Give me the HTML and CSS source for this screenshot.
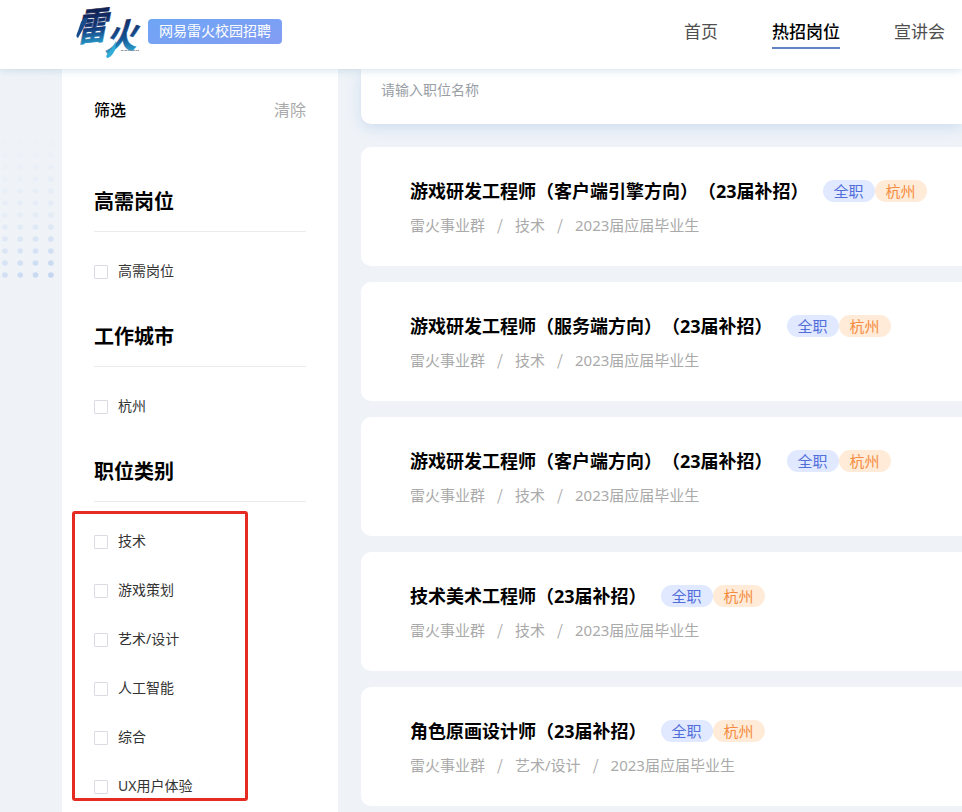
FILE: index.html
```
<!DOCTYPE html>
<html lang="zh-CN">
<head>
<meta charset="utf-8">
<title>网易雷火校园招聘</title>
<link rel="stylesheet" href="styles.css">
</head>
<body>
<header class="topbar">
  <div class="brand">
    <svg class="logo" width="68" height="60" viewBox="0 0 68 60">
      <defs>
        <linearGradient id="ink" gradientUnits="userSpaceOnUse" x1="0" y1="5" x2="0" y2="36">
          <stop offset="0" stop-color="#10204f"/><stop offset=".55" stop-color="#123b7c"/><stop offset="1" stop-color="#2aa5d3"/>
        </linearGradient>
        <linearGradient id="ink2" gradientUnits="userSpaceOnUse" x1="0" y1="22" x2="0" y2="54">
          <stop offset="0" stop-color="#123169"/><stop offset=".5" stop-color="#155293"/><stop offset="1" stop-color="#31b5dc"/>
        </linearGradient>
      </defs>
      <text class="ink" fill="url(#ink)" stroke="url(#ink)" transform="matrix(1 -.1 -.24 1.24 9 3)" x="0" y="31" font-size="31">雷</text>
      <text class="ink" fill="url(#ink2)" stroke="url(#ink2)" transform="matrix(1 -.12 -.3 1.12 16 1)" x="28" y="48" font-size="32">火</text>
      <path d="M6 22 Q10 16 13 18 Q10 26 3 38 Q0 37 3 31Z" fill="#174b8c"/>
      <path d="M31 56 Q37 49 41 41 L40 50 Q36 58 32 58Z" fill="#31add8"/>
      <path d="M46 50.5H64" stroke="#8895a3" stroke-dasharray="2 .6 1 .5"/>
    </svg>
    <span class="brand-tag">网易雷火校园招聘</span>
  </div>
  <nav class="nav">
    <a>首页</a><a class="active">热招岗位</a><a>宣讲会</a>
  </nav>
</header>
<main class="page">
  <svg class="dots" width="62" height="220">
    <defs>
      <pattern id="dot" patternUnits="userSpaceOnUse" x="-2.7" y="8" width="15.3" height="12"><circle cx="7.6" cy="6" r="2.8" fill="#bdd1ef"/></pattern>
      <linearGradient id="fade" x1="0" y1="0" x2="0" y2="1"><stop offset=".28" stop-color="#fff" stop-opacity="0"/><stop offset=".7" stop-color="#fff" stop-opacity=".25"/><stop offset="1" stop-color="#fff"/></linearGradient>
      <linearGradient id="side" x1="0" y1="0" x2="1" y2="0"><stop offset="0" stop-color="#eff4f9" stop-opacity=".4"/><stop offset="1" stop-color="#eff4f9" stop-opacity="0"/></linearGradient>
      <mask id="m"><rect width="62" height="212" fill="url(#fade)"/></mask>
    </defs>
    <rect width="58" height="211" fill="url(#dot)" mask="url(#m)"/>
    <rect width="58" height="211" fill="url(#side)"/>
  </svg>
  <aside class="sidebar">
    <div class="filter-head"><span>筛选</span><span class="clear">清除</span></div>
    <section class="group"><h3>高需岗位</h3>
      <label class="opt"><i></i>高需岗位</label></section>
    <section class="group"><h3>工作城市</h3>
      <label class="opt"><i></i>杭州</label></section>
    <section class="group"><h3>职位类别</h3>
      <label class="opt"><i></i>技术</label>
      <label class="opt"><i></i>游戏策划</label>
      <label class="opt"><i></i>艺术/设计</label>
      <label class="opt"><i></i>人工智能</label>
      <label class="opt"><i></i>综合</label>
      <label class="opt"><i></i>UX用户体验</label>
      <div class="highlight"></div>
    </section>
  </aside>
  <div class="content">
    <div class="search">请输入职位名称</div>
    <div class="jobs">
      <article class="job"><div class="title-row"><h2>游戏研发工程师（客户端引擎方向）（23届补招）</h2><span class="tag">全职</span><span class="tag city">杭州</span></div>
        <div class="meta"><span>雷火事业群</span><b>/</b><span>技术</span><b>/</b><span>2023届应届毕业生</span></div></article>
      <article class="job"><div class="title-row"><h2>游戏研发工程师（服务端方向）（23届补招）</h2><span class="tag">全职</span><span class="tag city">杭州</span></div>
        <div class="meta"><span>雷火事业群</span><b>/</b><span>技术</span><b>/</b><span>2023届应届毕业生</span></div></article>
      <article class="job"><div class="title-row"><h2>游戏研发工程师（客户端方向）（23届补招）</h2><span class="tag">全职</span><span class="tag city">杭州</span></div>
        <div class="meta"><span>雷火事业群</span><b>/</b><span>技术</span><b>/</b><span>2023届应届毕业生</span></div></article>
      <article class="job"><div class="title-row"><h2>技术美术工程师（23届补招）</h2><span class="tag">全职</span><span class="tag city">杭州</span></div>
        <div class="meta"><span>雷火事业群</span><b>/</b><span>技术</span><b>/</b><span>2023届应届毕业生</span></div></article>
      <article class="job"><div class="title-row"><h2>角色原画设计师（23届补招）</h2><span class="tag">全职</span><span class="tag city">杭州</span></div>
        <div class="meta"><span>雷火事业群</span><b>/</b><span>艺术/设计</span><b>/</b><span>2023届应届毕业生</span></div></article>
    </div>
  </div>
</main>
</body>
</html>
```
FILE: styles.css
```
* { box-sizing: border-box; }
body {
  margin: 0;
  width: 962px;
  height: 812px;
  overflow: hidden;
  background: #eff3f8;
  color: #000;
  font-family: "Noto Sans", "Noto Sans CJK SC", sans-serif;
  text-spacing-trim: space-all;
}
h2, h3 { margin: 0; }
.topbar {
  position: relative;
  z-index: 2;
  display: flex;
  justify-content: space-between;
  height: 69px;
  padding: 0 17px 0 75px;
  background: #fff;
  box-shadow: 0 1px 8px rgba(125, 165, 195, .35);
}
.brand { display: flex; gap: 5px; }
.logo { display: block; overflow: visible; }
.ink { font-family: "Noto Sans CJK SC", sans-serif; font-weight: 700; stroke-width: .5; }
.brand-tag {
  width: 134px;
  height: 25px;
  margin-top: 18.5px;
  border-radius: 4px;
  background: linear-gradient(165deg, #6ea5f5, #839df3);
  color: #fff;
  font-size: 14px;
  line-height: 24px;
  text-align: center;
}
.nav { display: flex; gap: 54px; font-size: 17px; color: #505050; }
.nav a { height: 49px; line-height: 25px; padding-top: 19px; white-space: nowrap; }
.nav .active { color: #000; font-weight: 500; border-bottom: 2px solid #6282c4; }
.page { display: flex; height: 743px; }
.dots { flex: none; }
.sidebar {
  flex: none;
  width: 276px;
  padding: 28px 32px 0;
  background: #fff;
}
.filter-head {
  display: flex;
  justify-content: space-between;
  height: 90px;
  font-size: 16px;
  line-height: 26px;
  font-weight: 500;
}
.clear { color: #aaa; font-weight: 400; }
.group { position: relative; height: 135px; }
.group h3 {
  height: 45px;
  margin-bottom: 14px;
  border-bottom: 1px solid #e9ebed;
  font-size: 20px;
  line-height: 30px;
}
.opt {
  display: flex;
  align-items: center;
  gap: 10px;
  height: 49px;
  color: #333;
  font-size: 14px;
  line-height: 20px;
}
.opt i { width: 14px; height: 14px; margin-top: 2px; border: 1px solid #d9dce2; border-radius: 1px; }
.highlight {
  position: absolute;
  left: -22px;
  top: 54px;
  width: 176px;
  height: 290px;
  border: 3px solid #e62b22;
  border-radius: 3px;
}
.content { flex: 1; min-width: 0; padding-left: 23px; }
.search {
  height: 55px;
  padding: 11px 20px;
  border-radius: 0 0 0 10px;
  background: #fff;
  box-shadow: 0 4px 14px rgba(125, 165, 220, .28);
  color: #999ea6;
  font-size: 14px;
  line-height: 20px;
}
.jobs { display: flex; flex-direction: column; gap: 16px; margin-top: 23px; }
.job { height: 119px; padding: 30px 0 0 49px; border-radius: 10px 0 0 10px; background: #fff; white-space: nowrap; }
.title-row { display: flex; align-items: center; height: 28px; }
.title-row h2 { margin-right: 14px; font-size: 18px; line-height: 28px; }
.tag {
  flex: none;
  width: 52px;
  height: 22px;
  border-radius: 11px;
  background: #e0e9ff;
  color: #526edb;
  font-size: 15px;
  line-height: 22px;
  text-align: center;
}
.city { background: #ffebd8; color: #f68b3f; }
.meta { display: flex; height: 24px; margin-top: 8px; color: #aaa; font-size: 15px; line-height: 24px; }
.meta b { width: 30px; font-family: "Noto Sans CJK SC", sans-serif; font-weight: 400; text-align: center; }
```
